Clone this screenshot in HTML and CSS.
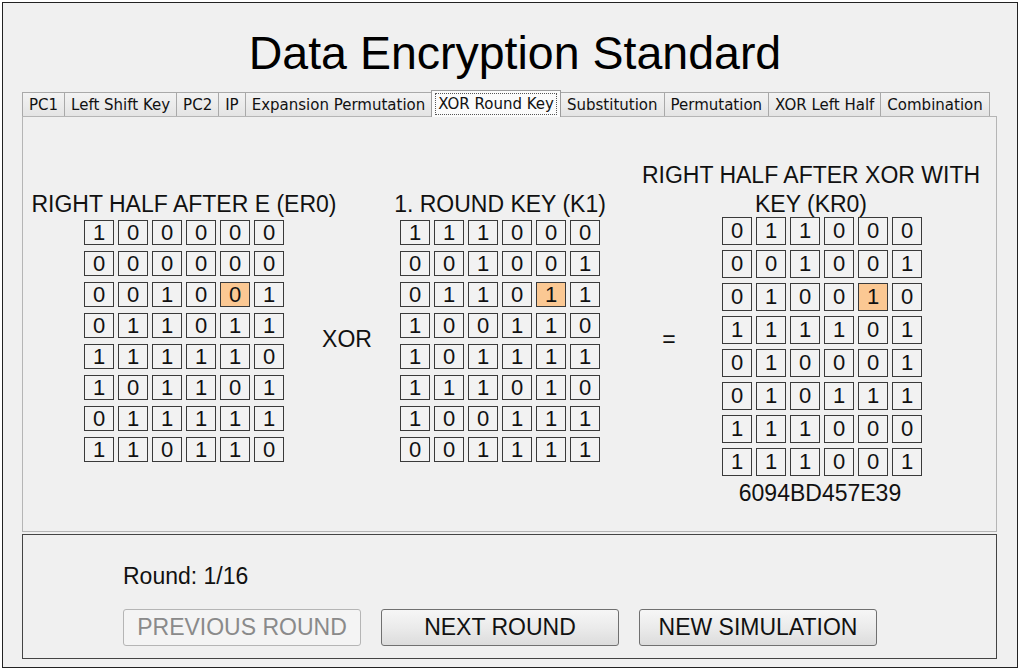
FILE: index.html
```html
<!DOCTYPE html>
<html lang="en">
<head>
    <meta charset="UTF-8">
    <title>Data Encryption Standard</title>
    <link rel="stylesheet" href="styles.css">
</head>
<body>

    <div class="window">
        <h1 class="title">Data Encryption Standard</h1>

        <!-- Schede dei passi del DES -->
        <div class="tabs">
            <div class="tab">PC1</div>
            <div class="tab">Left Shift Key</div>
            <div class="tab">PC2</div>
            <div class="tab">IP</div>
            <div class="tab">Expansion Permutation</div>
            <div class="tab active"><span class="focus">XOR Round Key</span></div>
            <div class="tab">Substitution</div>
            <div class="tab">Permutation</div>
            <div class="tab">XOR Left Half</div>
            <div class="tab">Combination</div>
        </div>

        <div class="panel">
            <div class="stage">
                <div class="col">
                    <div class="col-label">RIGHT HALF AFTER E (ER0)</div>
                    <div class="bits" id="er0"></div>
                </div>
                <div class="op op-xor">XOR</div>
                <div class="col">
                    <div class="col-label">1. ROUND KEY (K1)</div>
                    <div class="bits" id="k1"></div>
                </div>
                <div class="op op-eq">=</div>
                <div class="col col-result">
                    <div class="col-label">RIGHT HALF AFTER XOR WITH<br>KEY (KR0)</div>
                    <div class="bits bits-tall" id="kr0"></div>
                    <div class="hex">6094BD457E39</div>
                </div>
            </div>
        </div>

        <div class="controls">
            <div class="round">Round: 1/16</div>
            <div class="buttons">
                <button class="btn" disabled>PREVIOUS ROUND</button>
                <button class="btn">NEXT ROUND</button>
                <button class="btn">NEW SIMULATION</button>
            </div>
        </div>
    </div>

    <script>
    // Riempie le tre griglie di bit (8 righe x 6 colonne)
    const grids = {
        er0: ['100000', '000000', '001001', '011011', '111110', '101101', '011111', '110110'],
        k1:  ['111000', '001001', '011011', '100110', '101111', '111010', '100111', '001111'],
        kr0: ['011000', '001001', '010010', '111101', '010001', '010111', '111000', '111001']
    };
    const marked = 2 * 6 + 4; // riga 3, colonna 5 evidenziata

    Object.keys(grids).forEach(id => {
        const box = document.getElementById(id);
        grids[id].join('').split('').forEach((bit, i) => {
            const cell = document.createElement('div');
            cell.className = 'bit' + (i === marked ? ' hl' : '');
            cell.textContent = bit;
            box.appendChild(cell);
        });
    });
    </script>
</body>
</html>
```

FILE: styles.css
```css
/* Finestra stile Swing / Windows */
body {
    margin: 0;
    background: #fff;
    font-family: 'Liberation Sans', Arial, sans-serif;
    color: #111;
}

.window {
    box-sizing: border-box;
    width: 1016px;
    height: 666px;
    margin: 2px;
    border: 1px solid #222;
    background: #f0f0f0;
}

.title {
    margin: 0;
    padding: 24px 0 0 10px;
    height: 52px;
    line-height: 52px;
    font-size: 46.5px;
    font-weight: normal;
    text-align: center;
    color: #000;
}

/* Schede */
.tabs {
    display: flex;
    align-items: flex-end;
    height: 26px;
    margin: 11px 0 0 19px;
    font-family: 'DejaVu Sans', Tahoma, sans-serif;
    font-size: 15px;
}

.tab {
    box-sizing: border-box;
    height: 24px;
    line-height: 24px;
    padding: 0 6px;
    border: 1px solid #a9a9a9;
    border-bottom: none;
    margin-right: -1px;
    background: linear-gradient(#f3f3f3, #e4e4e4);
    color: #111;
    white-space: nowrap;
}

.tab.active {
    position: relative;
    z-index: 2;
    height: 27px;
    margin-bottom: -1px;
    padding: 2px 3px 0;
    border-color: #9c9c9c;
    background: #fbfbfb;
    line-height: 21px;
}

.tab .focus {
    display: inline-block;
    line-height: 20px;
    padding: 0 2px;
    border: 1px dotted #555;
}

.panel {
    box-sizing: border-box;
    width: 975px;
    height: 416px;
    margin-left: 19px;
    border: 1px solid #b5b5b5;
    background: #f0f0f0;
    position: relative;
    z-index: 1;
}

.stage {
    display: flex;
    align-items: flex-start;
    padding: 44px 0 0 51px;
}

.col {
    width: 220px;
    display: flex;
    flex-direction: column;
    align-items: center;
}

.col-label {
    flex: none;
    width: 360px;
    height: 58px;
    display: flex;
    flex-direction: column;
    justify-content: flex-end;
    text-align: center;
    font-size: 23px;
    line-height: 29px;
    white-space: nowrap;
}

.col-result .col-label {
    margin-right: 10px;
}

.bits {
    display: grid;
    grid-template-columns: repeat(6, 30px);
    grid-auto-rows: 25px;
    column-gap: 4px;
    row-gap: 6px;
    margin-top: 1px;
}

.bits-tall {
    grid-auto-rows: 28px;
    row-gap: 5px;
    margin-top: -2px;
    margin-left: 12px;
}

.bit {
    box-sizing: border-box;
    border: 1px solid #3a3a3a;
    background: #f2f2f2;
    font-size: 22px;
    display: flex;
    align-items: center;
    justify-content: center;
}

.bit.hl {
    background: #fbc893;
}

.hex {
    margin: 4px 0 0 8px;
    font-size: 23px;
    line-height: 26px;
}

.op {
    width: 96px;
    margin-top: 165px;
    font-size: 23px;
    line-height: 26px;
    text-align: center;
}

.op-xor {
    padding-left: 10px;
    box-sizing: border-box;
}

.op-eq {
    padding-left: 22px;
    box-sizing: border-box;
}

/* Pannello di controllo in basso */
.controls {
    box-sizing: border-box;
    width: 975px;
    height: 125px;
    margin: 2px 0 0 19px;
    border: 1px solid #444;
    padding: 28px 0 0 100px;
}

.round {
    font-size: 23px;
    line-height: 26px;
}

.buttons {
    display: flex;
    gap: 20px;
    margin-top: 20px;
}

.btn {
    box-sizing: border-box;
    width: 238px;
    height: 37px;
    padding: 0;
    border: 1px solid #707070;
    border-radius: 3px;
    background: linear-gradient(#f6f6f6 0%, #ebebeb 50%, #dcdcdc 100%);
    font-family: 'Liberation Sans', Arial, sans-serif;
    font-size: 23px;
    color: #111;
}

.btn:disabled {
    border-color: #b5b5b5;
    background: #f4f4f4;
    color: #8a8a8a;
}
```
